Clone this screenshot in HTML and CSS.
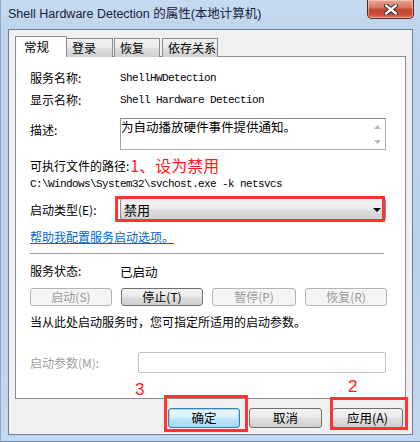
FILE: index.html
```html
<!DOCTYPE html>
<html lang="zh-CN">
<head>
<meta charset="utf-8">
<title>Shell Hardware Detection 的属性(本地计算机)</title>
<link rel="stylesheet" href="styles.css">
</head>
<body>
<div class="window">
  <div class="titlebar">
    <span class="title">Shell Hardware Detection 的属性(本地计算机)</span>
    <div class="close">
      <svg width="14" height="11" viewBox="0 0 14 11"><path d="M2 1.5 L12 9.5 M12 1.5 L2 9.5" stroke="#3b1d1d" stroke-width="4.2" stroke-linecap="round"/><path d="M2 1.5 L12 9.5 M12 1.5 L2 9.5" stroke="#ffffff" stroke-width="2.4" stroke-linecap="round"/></svg>
    </div>
  </div>
  <div class="client">
    <div class="tabs">
      <div class="tab active">常规</div>
      <div class="tab">登录</div>
      <div class="tab">恢复</div>
      <div class="tab">依存关系</div>
    </div>
    <div class="panel">
      <div class="row r1"><span class="label">服务名称:</span><span class="mono">ShellHWDetection</span></div>
      <div class="row r2"><span class="label">显示名称:</span><span class="mono">Shell Hardware Detection</span></div>
      <div class="row desc">
        <span class="label desc-label">描述:</span>
        <div class="textarea">
          <span class="ta-text">为自动播放硬件事件提供通知。</span>
          <div class="sb">
            <svg width="7" height="4" viewBox="0 0 7 4"><path d="M0 4 L3.5 0 L7 4 Z" fill="#b8b8b8"/></svg>
            <svg width="7" height="4" viewBox="0 0 7 4"><path d="M0 0 L3.5 4 L7 0 Z" fill="#b8b8b8"/></svg>
          </div>
        </div>
      </div>
      <div class="exe"><span class="label-inline">可执行文件的路径:</span><span class="note">1、设为禁用</span></div>
      <div class="path mono">C:\Windows\System32\svchost.exe -k netsvcs</div>
      <div class="row startup">
        <span class="label">启动类型(E):</span>
        <div class="select"><span>禁用</span><svg width="8" height="4" viewBox="0 0 8 4"><path d="M0 0 L8 0 L4 4 Z" fill="#000"/></svg></div>
      </div>
      <a class="link" href="#">帮助我配置服务启动选项。</a>
      <div class="sep"></div>
      <div class="row status"><span class="label">服务状态:</span><span class="val">已启动</span></div>
      <div class="btnrow">
        <button class="btn disabled">启动(S)</button>
        <button class="btn">停止(T)</button>
        <button class="btn disabled">暂停(P)</button>
        <button class="btn disabled">恢复(R)</button>
      </div>
      <div class="hint">当从此处启动服务时，您可指定所适用的启动参数。</div>
      <div class="row param">
        <span class="label param-label">启动参数(M):</span>
        <div class="input"></div>
      </div>
    </div>
    <div class="footer">
      <button class="btn big default">确定</button>
      <button class="btn big">取消</button>
      <button class="btn big">应用(A)</button>
    </div>
  </div>
  <div class="mark box1"></div>
  <div class="mark box2"></div>
  <div class="mark box3"></div>
  <span class="num n3">3</span>
  <span class="num n2">2</span>
</div>
</body>
</html>
```
FILE: styles.css
```css
* { box-sizing: border-box; }
html, body { margin: 0; padding: 0; }
body {
  width: 420px;
  height: 442px;
  overflow: hidden;
  font-family: "Noto Sans CJK SC", "Liberation Sans", sans-serif;
  font-size: 12px;
  color: #000;
  background: #bcd3ea;
}
.window {
  position: relative;
  width: 420px;
  height: 442px;
  padding: 0 7px;
  background: linear-gradient(180deg, #c7dbf0 0%, #bed4ec 30px, #b9d0e9 60%, #c3d8ee 100%);
  border-left: 1px solid #8fa8c2;
  border-bottom: 1px solid #7890aa;
}
.titlebar {
  height: 29px;
  display: flex;
  align-items: flex-start;
  justify-content: space-between;
}
.title {
  margin-top: 6px;
  font-family: "Liberation Sans", "Noto Sans CJK SC", sans-serif;
  font-size: 12.5px;
  line-height: 17px;
  color: #1b2140;
  white-space: nowrap;
}
.close {
  width: 47px;
  height: 19px;
  margin-right: -1px;
  border: 1px solid #5a2622;
  border-top: none;
  border-radius: 0 0 5px 5px;
  background: linear-gradient(180deg, #e6a698 0%, #d77a68 40%, #c2432f 55%, #cc4a35 80%, #e07b5e 100%);
  box-shadow: inset 0 0 0 1px rgba(255, 220, 210, 0.5);
  display: flex;
  align-items: center;
  justify-content: center;
}
.client {
  height: 406px;
  border: 1px solid #6f7f90;
  background: #f0f0f0;
  padding: 6px 8px 0 6px;
  display: flex;
  flex-direction: column;
}
.tabs {
  display: flex;
  align-items: flex-end;
  height: 21px;
  position: relative;
  z-index: 2;
  margin-bottom: -1px;
}
.tab {
  height: 19px;
  padding: 0 0 0 5px;
  border: 1px solid #898c95;
  border-bottom: none;
  background: linear-gradient(180deg, #f2f2f2 0%, #ebebeb 45%, #dddddd 55%, #cfcfcf 100%);
  font-size: 12px;
  line-height: 18px;
  color: #000;
  white-space: nowrap;
  overflow: hidden;
}
.tab:nth-child(2) { width: 47px; margin-left: -1px; }
.tab:nth-child(3) { width: 46px; margin-left: 1px; }
.tab:nth-child(4) { width: 56px; margin-left: 2px; }
.tab.active {
  height: 21px;
  width: 52px;
  padding: 0 0 0 8px;
  background: #ffffff;
  line-height: 20px;
  font-size: 12.5px;
  z-index: 3;
}
.panel {
  width: 391px;
  height: 343px;
  background: #ffffff;
  border: 1px solid #898c95;
  padding: 0 18px 0 14px;
  display: flex;
  flex-direction: column;
}
.row {
  display: flex;
  align-items: center;
}
.label {
  width: 90px;
  flex: none;
  color: #000;
  line-height: 20px;
}
.mono {
  font-family: "Liberation Mono", "DejaVu Sans Mono", monospace;
  font-size: 11px;
  letter-spacing: -0.6px;
  white-space: nowrap;
}
.r1 { margin-top: 11px; height: 20px; }
.r2 { margin-top: 2px; height: 20px; }
.desc { margin-top: 8px; align-items: flex-start; }
.desc-label { margin-top: 2px; }
.textarea {
  width: 266px;
  height: 32px;
  border: 1px solid #abadb3;
  border-top-color: #8a8a8a;
  border-left-color: #a0a0a0;
  display: flex;
  justify-content: space-between;
}
.ta-text { line-height: 16px; font-size: 12.5px; }
.sb {
  width: 16px;
  display: flex;
  flex-direction: column;
  align-items: center;
  justify-content: space-between;
  padding: 6px 0 5px;
}
.exe {
  margin-top: 6px;
  height: 20px;
  display: flex;
  align-items: center;
}
.label-inline { line-height: 20px; }
.note {
  color: #ff1a1a;
  font-size: 16px;
  line-height: 20px;
  margin-left: 1px;
  margin-top: -3px;
}
.path { height: 16px; line-height: 16px; }
.startup { margin-top: 6px; height: 23px; }
.select {
  width: 266px;
  height: 23px;
  border: 1px solid #8d8d8d;
  border-radius: 3px;
  background: linear-gradient(180deg, #f2f2f2 0%, #ebebeb 45%, #dddddd 55%, #cfcfcf 100%);
  display: flex;
  align-items: center;
  justify-content: space-between;
  padding: 0 4px 0 3px;
  font-size: 13px;
}
.link {
  margin-top: 7px;
  height: 18px;
  line-height: 18px;
  color: #0066cc;
  text-decoration: underline;
  align-self: flex-start;
}
.sep {
  margin-top: 7px;
  height: 1px;
  background: #a0a0a0;
  margin-right: 3px;
  flex: none;
}
.status { margin-top: 7px; height: 20px; }
.val { font-size: 12.5px; }
.btnrow {
  margin-top: 7px;
  display: flex;
  gap: 9px;
}
.btn {
  font-family: "Noto Sans CJK SC", "Liberation Sans", sans-serif;
  font-size: 12px;
  height: 18px;
  width: 82px;
  padding: 0;
  border: 1px solid #707070;
  border-radius: 3px;
  background: linear-gradient(180deg, #f2f2f2 0%, #ebebeb 45%, #dddddd 55%, #cfcfcf 100%);
  color: #000;
  line-height: 16px;
}
.btn.disabled {
  border-color: #b5b5b5;
  background: #f4f4f4;
  color: #9a9a9a;
}
.btnrow .btn:nth-child(3) { width: 84px; }
.hint { margin-top: 7px; line-height: 18px; height: 18px; }
.param { margin-top: 21px; }
.param-label { width: 108px; color: #a0a0a0; }
.input {
  width: 248px;
  height: 21px;
  border: 1px solid #c0c0c0;
  border-radius: 2px;
  background: #ffffff;
}
.footer {
  margin-top: 9px;
  display: flex;
  justify-content: flex-end;
  padding-right: 1px;
  gap: 9px;
}
.btn.big {
  height: 20px;
  width: 73px;
  font-size: 12.5px;
  line-height: 18px;
}
.footer .btn:last-child { width: 71px; margin-left: 1px; }
.btn.default {
  width: 72px;
  border-color: #3c7fb1;
  background: linear-gradient(180deg, #eaf6fd 0%, #d9f0fc 45%, #bee6fd 55%, #a7d9f5 100%);
  box-shadow: inset 0 0 0 1px #9fd8f8;
}
.mark {
  position: absolute;
  border: 3px solid #ff3333;
  pointer-events: none;
}
.box1 { left: 114px; top: 196px; width: 270px; height: 26px; }
.box2 { left: 163px; top: 395px; width: 84px; height: 37px; }
.box3 { left: 329px; top: 397px; width: 78px; height: 33px; }
.num {
  position: absolute;
  color: #ff1a1a;
  font-family: "Liberation Sans", sans-serif;
  font-size: 17px;
  line-height: 17px;
}
.n3 { left: 134px; top: 381px; }
.n2 { left: 347px; top: 378px; }
```
